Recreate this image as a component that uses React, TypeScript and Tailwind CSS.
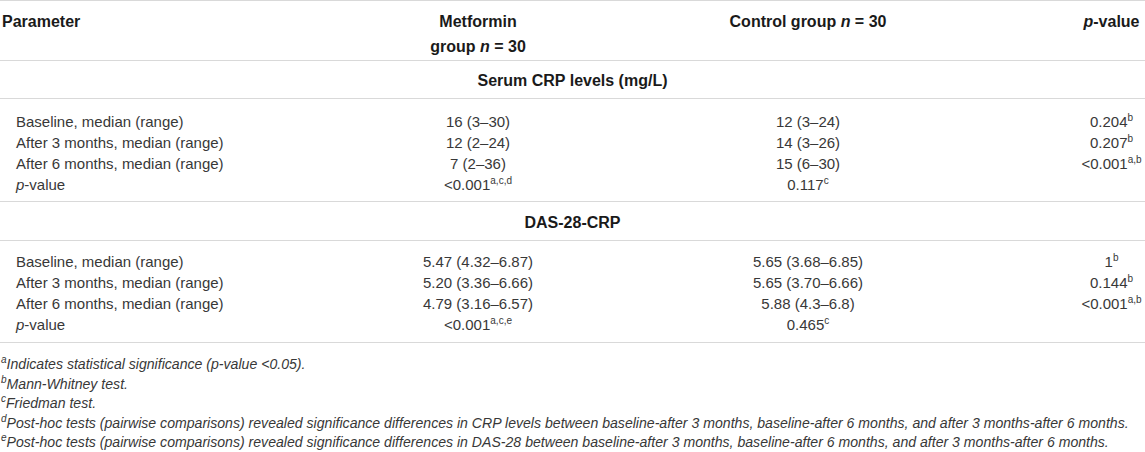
import React from "react";

type Row = { label: React.ReactNode; m: React.ReactNode; c: React.ReactNode; p: React.ReactNode };

const Sup = ({ children }: { children: React.ReactNode }) => (
  <sup className="text-[10px] relative -top-[6px] align-baseline leading-none">{children}</sup>
);

const PVal = () => (
  <span>
    <i>p</i>-value
  </span>
);

const crpRows: Row[] = [
  { label: "Baseline, median (range)", m: "16 (3–30)", c: "12 (3–24)", p: <>0.204<Sup>b</Sup></> },
  { label: "After 3 months, median (range)", m: "12 (2–24)", c: "14 (3–26)", p: <>0.207<Sup>b</Sup></> },
  { label: "After 6 months, median (range)", m: "7 (2–36)", c: "15 (6–30)", p: <>&lt;0.001<Sup>a,b</Sup></> },
  { label: <PVal />, m: <>&lt;0.001<Sup>a,c,d</Sup></>, c: <>0.117<Sup>c</Sup></>, p: "" },
];

const dasRows: Row[] = [
  { label: "Baseline, median (range)", m: "5.47 (4.32–6.87)", c: "5.65 (3.68–6.85)", p: <>1<Sup>b</Sup></> },
  { label: "After 3 months, median (range)", m: "5.20 (3.36–6.66)", c: "5.65 (3.70–6.66)", p: <>0.144<Sup>b</Sup></> },
  { label: "After 6 months, median (range)", m: "4.79 (3.16–6.57)", c: "5.88 (4.3–6.8)", p: <>&lt;0.001<Sup>a,b</Sup></> },
  { label: <PVal />, m: <>&lt;0.001<Sup>a,c,e</Sup></>, c: <>0.465<Sup>c</Sup></>, p: "" },
];

const Rows = ({ rows, pt, pb }: { rows: Row[]; pt: string; pb: string }) => (
  <div className={`border-b border-[#d9d9d9] ${pt} ${pb}`}>
    {rows.map((r, i) => (
      <div key={i} className="grid grid-cols-[420px_116px_544px_63px] text-[15px] leading-[21px] text-[#383838]">
        <div className="pl-[16px] whitespace-nowrap">{r.label}</div>
        <div className="text-center whitespace-nowrap">{r.m}</div>
        <div className="text-center whitespace-nowrap">{r.c}</div>
        <div className="text-center whitespace-nowrap">{r.p}</div>
      </div>
    ))}
  </div>
);

const SectionHead = ({ children, h }: { children: React.ReactNode; h: string }) => (
  <div className={`${h} pt-[3px] border-b border-[#d9d9d9] flex items-center justify-center font-bold text-[16px] text-[#1a1a1a]`}>
    {children}
  </div>
);

export default function App() {
  return (
    <div className="w-[1145px] h-[452px] bg-white overflow-hidden font-['Liberation_Sans',Arial,Helvetica,sans-serif] text-[#383838]">
      <div className="border-t border-[#d9d9d9]" />
      <div className="h-[60px] border-b border-[#d9d9d9] grid grid-cols-[420px_116px_544px_63px] items-start pt-[8px] text-[16px] leading-[25px] font-bold text-[#1a1a1a]">
        <div className="pl-[2px]">Parameter</div>
        <div className="text-center whitespace-nowrap">
          Metformin
          <br />
          group <i>n</i> = 30
        </div>
        <div className="text-center whitespace-nowrap">
          Control group <i>n</i> = 30
        </div>
        <div className="text-center whitespace-nowrap">
          <i>p</i>-value
        </div>
      </div>
      <SectionHead h="h-[38px]">Serum CRP levels (mg/L)</SectionHead>
      <Rows rows={crpRows} pt="pt-[12px]" pb="pb-[6px]" />
      <SectionHead h="h-[39px]">DAS-28-CRP</SectionHead>
      <Rows rows={dasRows} pt="pt-[10px]" pb="pb-[7px]" />
      <div className="pt-[12px] text-[14.1px] leading-[19.5px] italic text-[#383838]">
        <div className="pl-[1px]"><Sup>a</Sup>Indicates statistical significance (p-value &lt;0.05).</div>
        <div className="pl-[1px]"><Sup>b</Sup>Mann-Whitney test.</div>
        <div className="pl-[1px]"><Sup>c</Sup>Friedman test.</div>
        <div className="pl-[1px]"><Sup>d</Sup>Post-hoc tests (pairwise comparisons) revealed significance differences in CRP levels between baseline-after 3 months, baseline-after 6 months, and after 3 months-after 6 months.</div>
        <div className="pl-[1px]"><Sup>e</Sup>Post-hoc tests (pairwise comparisons) revealed significance differences in DAS-28 between baseline-after 3 months, baseline-after 6 months, and after 3 months-after 6 months.</div>
      </div>
    </div>
  );
}
